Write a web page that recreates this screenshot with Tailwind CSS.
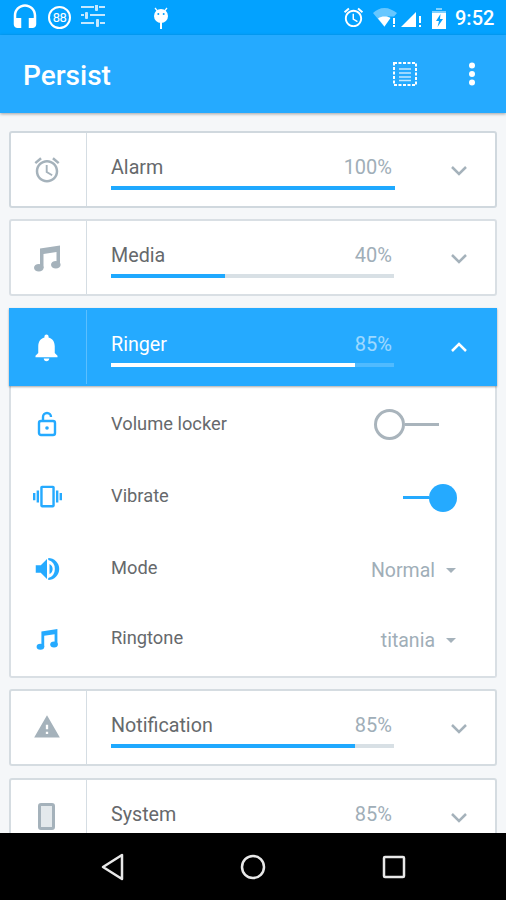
<!DOCTYPE html>
<html lang="en">
<head>
    <meta charset="UTF-8">
    <meta name="viewport" content="width=device-width, initial-scale=1.0">
    <title>Persist</title>
    <script src="https://cdn.jsdelivr.net/npm/@tailwindcss/browser@4"></script>
</head>
<body class="bg-black">
<div class="w-[506px] h-[900px] flex flex-col overflow-hidden font-['Roboto',sans-serif]">

    <!-- status bar -->
    <div class="h-[35px] shrink-0 bg-[#03a2ff] flex items-center text-white relative">
        <svg class="w-[30px] h-[30px] ml-[10px]" viewBox="0 0 24 24" fill="#fff"><path d="M12 1c-5 0-9 4-9 9v7c0 1.66 1.34 3 3 3h3v-8H5v-2c0-3.87 3.13-7 7-7s7 3.13 7 7v2h-4v8h3c1.66 0 3-1.34 3-3v-7c0-5-4.03-9-9-9z"/></svg>
        <div class="w-[23px] h-[23px] ml-[8px] rounded-full border-2 border-white flex items-center justify-center text-[13px] leading-none tracking-[-0.5px]">88</div>
        <svg class="w-[24px] h-[24px] ml-[10px] mb-[2px]" viewBox="0 0 24 24" fill="#c4e8ff"><path d="M0 3h13V1H0zM18 3h6V1h-6zM0 11h3V9H0zM9 11h15V9H9zM0 19h13v-2H0zM19 19h5v-2h-5z"/><rect x="14" y="-1" width="3" height="7" rx="1"/><rect x="4" y="7" width="3" height="7" rx="1"/><rect x="15" y="14" width="3" height="8" rx="1"/></svg>
        <svg class="w-[16px] h-[24px] ml-[48px]" viewBox="0 0 16 24" fill="#fff"><path d="M2 2l2.500 3M14 2l-2.500 3" stroke="#fff" stroke-width="1.200"/><circle cx="8" cy="10" r="7"/><rect x="7" y="16" width="2" height="7"/><circle cx="5.300" cy="8" r="1" fill="#03a2ff"/><circle cx="10.700" cy="8" r="1" fill="#03a2ff"/></svg>
        <svg class="w-[23px] h-[23px] ml-[173px]" viewBox="0 0 24 24" fill="#fff"><path d="M22 5.720l-4.600-3.860-1.290 1.530 4.600 3.860L22 5.720zM7.880 3.390L6.600 1.860 2 5.710l1.290 1.530 4.590-3.850zM12.500 8H11v6l4.750 2.850.75-1.230-4-2.370V8zM12 4c-4.970 0-9 4.030-9 9s4.020 9 9 9c4.970 0 9-4.030 9-9s-4.030-9-9-9zm0 16c-3.870 0-7-3.130-7-7s3.130-7 7-7 7 3.130 7 7-3.130 7-7 7z"/></svg>
        <svg class="w-[25px] h-[20px] ml-[8px]" viewBox="0 0 25 20"><path d="M0 5C3 2 7 0 11.500 0S20 2 24 5l-3 3.500H15L11.500 19 0 5z" fill="#fff" fill-opacity=".4"/><path d="M5 10.500c2-1.500 4-2 6.500-2s4.500.5 6 1.500l-6 8.500z" fill="#fff"/><rect x="20" y="10" width="2" height="6" fill="#fff"/><rect x="20" y="17" width="2" height="2" fill="#fff"/></svg>
        <svg class="w-[21px] h-[20px] ml-[3px]" viewBox="0 0 21 20" fill="#fff"><path d="M0 19L15 4v15z"/><rect x="18" y="8" width="2" height="7"/><rect x="18" y="17" width="2" height="2"/></svg>
        <svg class="w-[14px] h-[22px] ml-[10px]" viewBox="0 0 14 22"><path d="M4 1h6v2H4z" fill="#fff" fill-opacity=".5"/><path d="M0 4h14v18H0z" fill="#fff" fill-opacity=".5"/><path d="M0 6h14v16H0z" fill="#fff"/><path d="M8.500 7L4 14h3l-1.500 6L11 12H8z" fill="#03a2ff"/></svg>
        <span class="ml-[9px] text-[20px] font-medium leading-none">9:52</span>
    </div>

    <!-- app bar -->
    <div class="h-[78px] shrink-0 bg-[#25aaff] flex items-center text-white shadow-[0_1px_3px_rgba(0,0,0,0.35)] relative z-10">
        <span class="ml-[23px] mt-[4px] text-[28px] font-medium leading-none">Persist</span>
        <svg class="w-[24px] h-[24px] ml-auto" viewBox="0 0 24 24" fill="none" stroke="#fff"><rect x="1" y="1" width="22" height="22" stroke-width="2" stroke-dasharray="3 1.500"/><path d="M6 7h12M6 11h12M6 15h12M6 18.500h12" stroke-width="1.500" stroke="#c4e8ff"/></svg>
        <svg class="w-[6px] h-[24px] ml-[52px] mr-[31px]" viewBox="0 0 6 24" fill="#fff"><circle cx="3" cy="3.500" r="3"/><circle cx="3" cy="12" r="3"/><circle cx="3" cy="20.500" r="3"/></svg>
    </div>

    <!-- volume list -->
    <div class="h-[720px] shrink-0 bg-[#f5f7f9] px-[9px] pt-[18px] overflow-hidden">

        <div class="flex h-[77px] w-[488px] bg-white border-2 border-[#d0d8de] rounded-[3px] mb-[11px]">
            <div class="w-[76px] pr-[4px] border-r border-[#d5dde3] flex items-center justify-center">
                <svg class="w-[30px] h-[30px]" viewBox="0 0 24 24" fill="#a5b2bb"><path d="M22 5.720l-4.600-3.860-1.290 1.530 4.600 3.860L22 5.720zM7.880 3.390L6.600 1.860 2 5.710l1.290 1.530 4.590-3.850zM12.500 8H11v6l4.750 2.850.75-1.230-4-2.370V8zM12 4c-4.970 0-9 4.030-9 9s4.020 9 9 9c4.970 0 9-4.030 9-9s-4.030-9-9-9zm0 16c-3.870 0-7-3.130-7-7s3.130-7 7-7 7 3.130 7 7-3.130 7-7 7z"/></svg>
            </div>
            <div class="w-[307px] pl-[24px] pt-[21px]">
                <div class="w-[283px] flex justify-between leading-[26px] pr-[2px]">
                    <span class="pt-[1px] text-[19.700px] text-[#66696c]">Alarm</span>
                    <span class="text-[20px] text-[#a0aeb8]">100%</span>
                </div>
                <div class="w-[284px] h-[4px] mt-[5px] bg-[#d8e0e5]"><div class="h-full w-full bg-[#1fa9ff]"></div></div>
            </div>
            <div class="ml-[53px] flex items-center w-[24px]">
                <svg class="w-[24px] h-[24px]" viewBox="0 0 24 24" fill="none" stroke="#a5b2bb" stroke-width="2.500"><path d="M5 9l7 7 7-7"/></svg>
            </div>
        </div>

        <div class="flex h-[77px] w-[488px] bg-white border-2 border-[#d9dfe4] rounded-[3px] mb-[12px]">
            <div class="w-[76px] pr-[4px] border-r border-[#d5dde3] flex items-center justify-center">
                <svg class="w-[30px] h-[30px]" viewBox="0 0 30 30" fill="#a5b2bb"><path d="M8 5.500L28 2.500V22h-3.500V9L11.500 11v14H8z"/><ellipse cx="6.800" cy="24.700" rx="4.800" ry="3.800"/><ellipse cx="23.800" cy="21.800" rx="4.800" ry="3.800"/></svg>
            </div>
            <div class="w-[307px] pl-[24px] pt-[21px]">
                <div class="w-[283px] flex justify-between leading-[26px] pr-[2px]">
                    <span class="pt-[1px] text-[19.700px] text-[#66696c]">Media</span>
                    <span class="text-[20px] text-[#a0aeb8]">40%</span>
                </div>
                <div class="w-[283px] h-[4px] mt-[5px] bg-[#d8e0e5]"><div class="h-full w-[114px] bg-[#1fa9ff]"></div></div>
            </div>
            <div class="ml-[53px] flex items-center w-[24px]">
                <svg class="w-[24px] h-[24px]" viewBox="0 0 24 24" fill="none" stroke="#a5b2bb" stroke-width="2.500"><path d="M5 9l7 7 7-7"/></svg>
            </div>
        </div>

        <div class="flex h-[78px] w-[488px] bg-[#25aaff] border-2 border-[#25aaff] shadow-[0_1px_2px_rgba(0,0,0,0.35)] relative">
            <div class="w-[76px] pr-[4px] border-r border-white/25 flex items-center justify-center">
                <svg class="w-[33px] h-[33px]" viewBox="0 0 24 24" fill="#fff"><path d="M12 22c1.100 0 2-.9 2-2h-4c0 1.100.9 2 2 2zm6-6v-5c0-3.070-1.630-5.640-4.500-6.320V4c0-.83-.67-1.500-1.500-1.500s-1.500.67-1.500 1.500v.68C7.640 5.360 6 7.920 6 11v5l-2 2v1h16v-1l-2-2z"/></svg>
            </div>
            <div class="w-[307px] pl-[24px] pt-[21px]">
                <div class="w-[283px] flex justify-between leading-[26px] pr-[2px]">
                    <span class="pt-[1px] text-[19.700px] text-white">Ringer</span>
                    <span class="text-[20px] text-white/55">85%</span>
                </div>
                <div class="w-[283px] h-[4px] mt-[5px] bg-white/20"><div class="h-full w-[244px] bg-white"></div></div>
            </div>
            <div class="ml-[53px] flex items-center w-[24px]">
                <svg class="w-[24px] h-[24px]" viewBox="0 0 24 24" fill="none" stroke="#fff" stroke-width="2.500"><path d="M5 16l7-7 7 7"/></svg>
            </div>
        </div>

        <!-- ringer details -->
        <div class="w-[488px] h-[292px] bg-white border-x-2 border-b-2 border-[#d9dfe4] rounded-b-[3px] pt-[2px] mb-[11px]">
            <div class="flex items-center h-[72px]">
                <div class="w-[76px] pr-[4px] flex justify-center">
                    <svg class="w-[20px] h-[26px]" viewBox="0 0 20 26" fill="none" stroke="#25aaff" stroke-width="2.400"><rect x="2" y="10" width="16" height="14" rx="2"/><path d="M6 10V6a4 4 0 0 1 8 0"/><circle cx="10" cy="17" r="1.800" fill="#25aaff" stroke="none"/></svg>
                </div>
                <span class="ml-[24px] text-[18.300px] text-[#66696c]">Volume locker</span>
                <div class="ml-auto mr-[56px] flex items-center">
                    <div class="w-[31px] h-[31px] rounded-full border-[3px] border-[#a9b4bc]"></div>
                    <div class="w-[34px] h-[3px] bg-[#a9b4bc]"></div>
                </div>
            </div>
            <div class="flex items-center h-[72px]">
                <div class="w-[76px] pr-[4px] flex justify-center">
                    <svg class="w-[29px] h-[29px]" viewBox="0 0 24 24" fill="#25aaff"><path d="M0 15h2V9H0v6zm3 2h2V7H3v10zm19-8v6h2V9h-2zm-3 8h2V7h-2v10zM16.500 3h-9C6.670 3 6 3.670 6 4.500v15c0 .83.67 1.500 1.500 1.500h9c.83 0 1.500-.67 1.500-1.500v-15c0-.83-.67-1.500-1.500-1.500zM16 19H8V5h8v14z"/></svg>
                </div>
                <span class="ml-[24px] text-[18.300px] text-[#66696c]">Vibrate</span>
                <div class="ml-auto mr-[38px] mt-[3px] flex items-center">
                    <div class="w-[26px] h-[3px] bg-[#25aaff]"></div>
                    <div class="w-[28px] h-[28px] rounded-full bg-[#25aaff]"></div>
                </div>
            </div>
            <div class="flex items-center h-[72px]">
                <div class="w-[76px] pr-[4px] flex justify-center">
                    <svg class="w-[30px] h-[30px] mt-[2px]" viewBox="0 0 24 24" fill="#25aaff"><path d="M3 9v6h4l5 5V4L7 9H3z"/><path d="M16.500 12A4.500 4.500 0 0 0 14 7.970v8.050A4.470 4.470 0 0 0 16.500 12z"/><path d="M14 3.230v1.600a7.500 7.500 0 0 1 0 14.340v1.600A8.500 8.500 0 0 0 14 3.230z" transform="translate(-1 0)"/></svg>
                </div>
                <span class="ml-[24px] text-[18.300px] text-[#66696c]">Mode</span>
                <div class="ml-auto mr-[39px] mt-[6px] flex items-center">
                    <span class="text-[19.500px] text-[#a0aeb8] leading-none">Normal</span>
                    <div class="ml-[11px] mb-[2px] w-0 h-0 border-x-[5px] border-x-transparent border-t-[5px] border-t-[#a5b2bb]"></div>
                </div>
            </div>
            <div class="flex items-center h-[72px]">
                <div class="w-[76px] pr-[4px] flex justify-center">
                    <svg class="w-[24px] h-[24px] mb-[2px]" viewBox="0 0 30 30" fill="#25aaff"><path d="M8 5.500L28 2.500V22h-3.500V9L11.500 11v14H8z"/><ellipse cx="6.800" cy="24.700" rx="4.800" ry="3.800"/><ellipse cx="23.800" cy="21.800" rx="4.800" ry="3.800"/></svg>
                </div>
                <span class="ml-[24px] mb-[4px] text-[18.300px] text-[#66696c]">Ringtone</span>
                <div class="ml-auto mr-[39px] mt-[2px] flex items-center">
                    <span class="text-[19.500px] text-[#a0aeb8] leading-none">titania</span>
                    <div class="ml-[11px] mb-[2px] w-0 h-0 border-x-[5px] border-x-transparent border-t-[5px] border-t-[#a5b2bb]"></div>
                </div>
            </div>
        </div>

        <div class="flex h-[77px] w-[488px] bg-white border-2 border-[#d5dce1] rounded-[3px] mb-[12px]">
            <div class="w-[76px] pr-[4px] border-r border-[#d5dde3] flex items-center justify-center">
                <svg class="w-[28px] h-[28px] mb-[1px]" viewBox="0 0 24 24" fill="#a5b2bb"><path d="M1 21h22L12 2 1 21zm12-3h-2v-2h2v2zm0-4h-2v-4h2v4z"/></svg>
            </div>
            <div class="w-[307px] pl-[24px] pt-[21px]">
                <div class="w-[283px] flex justify-between leading-[26px] pr-[2px]">
                    <span class="pt-[1px] text-[19.700px] text-[#66696c]">Notification</span>
                    <span class="text-[20px] text-[#a0aeb8]">85%</span>
                </div>
                <div class="w-[283px] h-[4px] mt-[5px] bg-[#d8e0e5]"><div class="h-full w-[244px] bg-[#1fa9ff]"></div></div>
            </div>
            <div class="ml-[53px] flex items-center w-[24px]">
                <svg class="w-[24px] h-[24px]" viewBox="0 0 24 24" fill="none" stroke="#a5b2bb" stroke-width="2.500"><path d="M5 9l7 7 7-7"/></svg>
            </div>
        </div>

        <div class="flex h-[77px] w-[488px] bg-white border-2 border-[#d5dce1] rounded-[3px]">
            <div class="w-[76px] pr-[4px] border-r border-[#d5dde3] flex items-center justify-center">
                <svg class="w-[17px] h-[27px]" viewBox="0 0 17 27" fill="#e4e9ec" stroke="#a5b2bb" stroke-width="3"><rect x="1.500" y="1.500" width="14" height="24" rx="1.500"/></svg>
            </div>
            <div class="w-[307px] pl-[24px] pt-[21px]">
                <div class="w-[283px] flex justify-between leading-[26px] pr-[2px]">
                    <span class="pt-[1px] text-[19.700px] text-[#66696c]">System</span>
                    <span class="text-[20px] text-[#a0aeb8]">85%</span>
                </div>
                <div class="w-[283px] h-[4px] mt-[5px] bg-[#d8e0e5]"><div class="h-full w-[244px] bg-[#1fa9ff]"></div></div>
            </div>
            <div class="ml-[53px] flex items-center w-[24px]">
                <svg class="w-[24px] h-[24px]" viewBox="0 0 24 24" fill="none" stroke="#a5b2bb" stroke-width="2.500"><path d="M5 9l7 7 7-7"/></svg>
            </div>
        </div>
    </div>

    <!-- nav bar -->
    <div class="h-[67px] shrink-0 bg-black flex items-center relative z-10">
        <svg class="w-[24px] h-[28px] ml-[100px]" viewBox="0 0 24 28" fill="none" stroke="#e8e8e8" stroke-width="2.500" stroke-linejoin="round"><path d="M22 2v24L3 14z"/></svg>
        <svg class="w-[26px] h-[26px] ml-[116px]" viewBox="0 0 26 26" fill="none" stroke="#e8e8e8" stroke-width="2.500"><circle cx="13" cy="13" r="11"/></svg>
        <svg class="w-[24px] h-[24px] ml-[116px]" viewBox="0 0 24 24" fill="none" stroke="#e8e8e8" stroke-width="2.500" stroke-linejoin="round"><rect x="2" y="2" width="20" height="20" rx="1"/></svg>
    </div>
</div>
</body>
</html>
